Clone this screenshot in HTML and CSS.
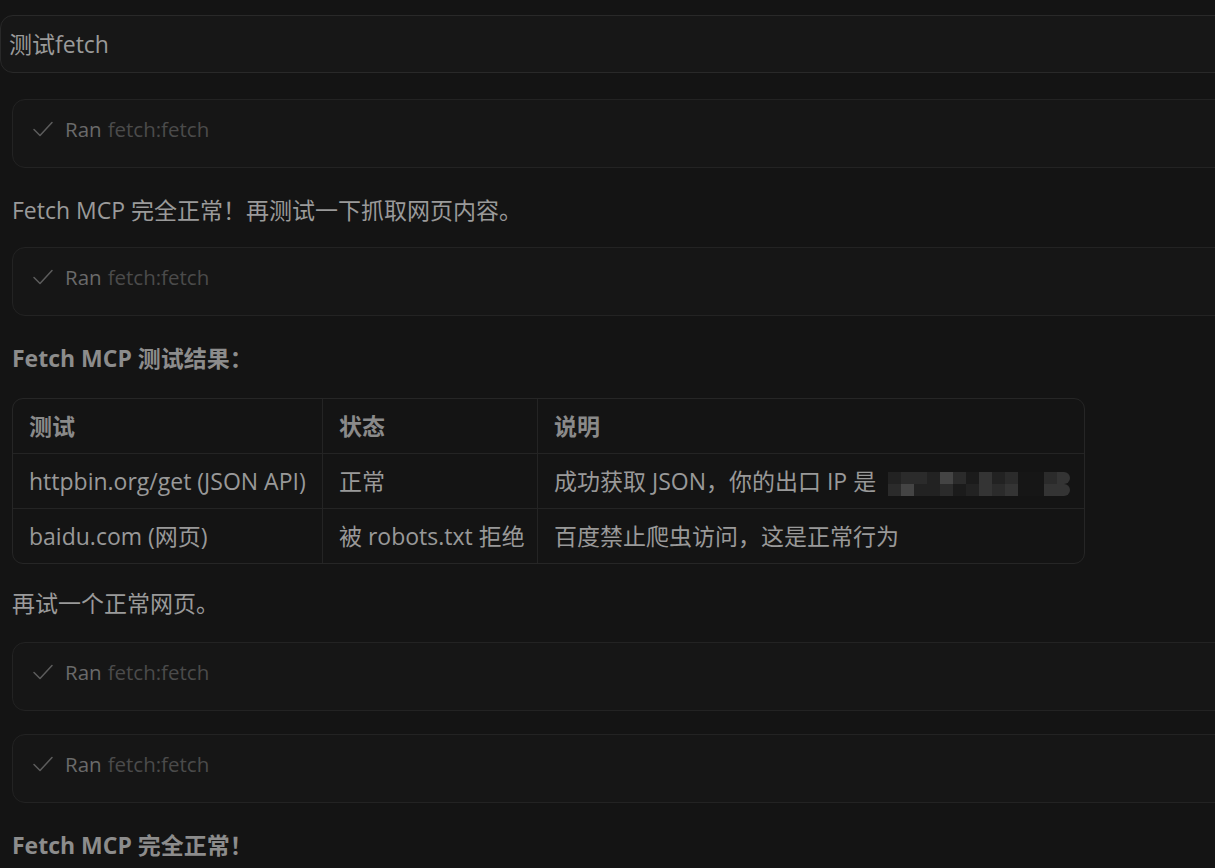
FILE: index.html
```html
<!DOCTYPE html>
<html lang="zh-CN">
<head>
    <meta charset="UTF-8">
    <meta name="viewport" content="width=device-width, initial-scale=1.0">
    <title>测试fetch</title>
    <link rel="stylesheet" href="styles.css">
</head>
<body>
    <div class="thread">
        <div class="user-msg">测试fetch</div>

        <div class="reply">
            <div class="tool-call">
                <svg class="check" width="20" height="16" viewBox="0 0 20 16"><path d="M1 8.5 L7 14.5 L19 1.5"/></svg>
                <span class="tool-verb">Ran</span>
                <span class="tool-name">fetch:fetch</span>
            </div>

            <p class="text">Fetch MCP 完全正常！再测试一下抓取网页内容。</p>

            <div class="tool-call">
                <svg class="check" width="20" height="16" viewBox="0 0 20 16"><path d="M1 8.5 L7 14.5 L19 1.5"/></svg>
                <span class="tool-verb">Ran</span>
                <span class="tool-name">fetch:fetch</span>
            </div>

            <p class="text strong">Fetch MCP 测试结果：</p>

            <div class="table-wrap">
                <table class="result">
                    <thead>
                        <tr>
                            <th class="col-test">测试</th>
                            <th class="col-state">状态</th>
                            <th class="col-note">说明</th>
                        </tr>
                    </thead>
                    <tbody>
                        <tr>
                            <td>httpbin.org/get (JSON API)</td>
                            <td>正常</td>
                            <td>成功获取 JSON，你的出口 IP 是 <span class="mosaic"><i class="m2"></i><i class="m3"></i><i class="m3"></i><i class="m2"></i><i class="m5"></i><i class="m3"></i><i class="m1"></i><i class="m4"></i><i class="m2"></i><i class="m3"></i><i class="m0"></i><i class="m0"></i><i class="m3"></i><i class="m4 end"></i><i class="m3"></i><i class="m5"></i><i class="m2"></i><i class="m2"></i><i class="m3"></i><i class="m1"></i><i class="m2"></i><i class="m4"></i><i class="m3"></i><i class="m4"></i><i class="m0"></i><i class="m0"></i><i class="m4"></i><i class="m4 end"></i></span></td>
                        </tr>
                        <tr>
                            <td>baidu.com (网页)</td>
                            <td>被 robots.txt 拒绝</td>
                            <td>百度禁止爬虫访问，这是正常行为</td>
                        </tr>
                    </tbody>
                </table>
            </div>

            <p class="text">再试一个正常网页。</p>

            <div class="tool-call">
                <svg class="check" width="20" height="16" viewBox="0 0 20 16"><path d="M1 8.5 L7 14.5 L19 1.5"/></svg>
                <span class="tool-verb">Ran</span>
                <span class="tool-name">fetch:fetch</span>
            </div>

            <div class="tool-call">
                <svg class="check" width="20" height="16" viewBox="0 0 20 16"><path d="M1 8.5 L7 14.5 L19 1.5"/></svg>
                <span class="tool-verb">Ran</span>
                <span class="tool-name">fetch:fetch</span>
            </div>

            <p class="text strong">Fetch MCP 完全正常！</p>
        </div>
    </div>
</body>
</html>
```

FILE: styles.css
```css
body {
    background-color: #141414;
    color: #999999;
    margin: 0;
    font-family: "Open Sans", "Noto Sans CJK SC", sans-serif;
    font-size: 23px;
    overflow: hidden;
}
.thread {
    padding-top: 15px;
    overflow: hidden;
}
.user-msg {
    margin-right: -30px;
    height: 56px;
    line-height: 56px;
    padding-left: 8px;
    background-color: #171717;
    border: 1px solid #292929;
    border-radius: 13px;
    color: #9a9a9a;
}
.reply {
    padding-left: 12px;
    padding-top: 26px;
}
.tool-call {
    display: flex;
    align-items: center;
    margin-right: -30px;
    height: 28px;
    padding: 15px 20px 24px 20px;
    background-color: #161616;
    border: 1px solid #232323;
    border-radius: 13px;
    margin-bottom: 23px;
    font-size: 20.5px;
}
.check {
    fill: none;
    stroke: #5c5c5c;
    stroke-width: 1.5;
    margin-right: 12px;
}
.check path {
    stroke-linecap: round;
    stroke-linejoin: round;
}
.tool-verb {
    color: #6a6a6a;
    margin-right: 6px;
}
.tool-name {
    color: #4b4b4b;
}
.text {
    margin: 0 0 18px 0;
    line-height: 38px;
    color: #9a9a9a;
}
.strong {
    font-weight: bold;
    color: #8c8c8c;
}
.table-wrap {
    width: 1071px;
    border: 1px solid #262626;
    border-radius: 11px;
    overflow: hidden;
    margin-top: 21px;
    margin-bottom: 20px;
}
.table-wrap + .text {
    margin-bottom: 20px;
}
.result {
    width: 100%;
    border-collapse: collapse;
    table-layout: fixed;
}
.result th,
.result td {
    text-align: left;
    padding: 10px 16px;
    height: 34px;
    line-height: 34px;
    border-right: 1px solid #242424;
    border-top: 1px solid #242424;
    white-space: nowrap;
}
.result th:last-child,
.result td:last-child {
    border-right: none;
}
.result thead th {
    border-top: none;
    font-weight: bold;
    color: #8a8a8a;
}
.result td {
    color: #999999;
}
.col-test {
    width: 277px;
}
.col-state {
    width: 182px;
}
.mosaic {
    display: inline-grid;
    grid-template-columns: repeat(14, 13px);
    grid-template-rows: 12px 12px;
    vertical-align: middle;
    margin-left: 6px;
}
.mosaic i {
    display: block;
}
.mosaic .end {
    border-radius: 0 6px 6px 0;
}
.m0 { background-color: #161616; }
.m1 { background-color: #1b1b1b; }
.m2 { background-color: #222222; }
.m3 { background-color: #2b2b2b; }
.m4 { background-color: #343434; }
.m5 { background-color: #444444; }
```
